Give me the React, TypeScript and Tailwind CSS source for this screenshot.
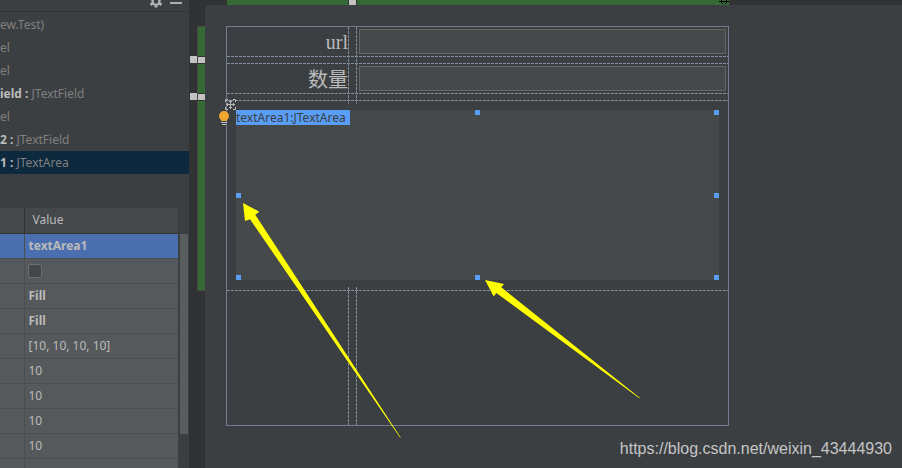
import { useState } from "react";

type TreeItem = {
  name?: string;
  type: string;
  selected?: boolean;
};

const treeItems: TreeItem[] = [
  { type: "ew.Test)" },
  { type: "el" },
  { type: "el" },
  { name: "ield", type: "JTextField" },
  { type: "el" },
  { name: "2", type: "JTextField" },
  { name: "1", type: "JTextArea", selected: true },
];

const properties = ["Fill", "Fill", "[10, 10, 10, 10]", "10", "10", "10", "10", ""];

const hGuide =
  "h-px w-full bg-[repeating-linear-gradient(90deg,#838d9c_0_3px,transparent_3px_4px)]";
const vGuide =
  "w-px bg-[repeating-linear-gradient(180deg,#838d9c_0_3px,transparent_3px_4px)]";

const Tree = () => (
  <ul className="mt-px h-[195px] shrink-0">
    {treeItems.map((item, index) => (
      <li
        key={index}
        className={
          item.selected
            ? "flex h-[23px] items-center bg-[#0d293e] whitespace-pre"
            : "flex h-[23px] items-center whitespace-pre"
        }
      >
        {item.name && <span className="font-bold text-[#bbbbbb]">{item.name} : </span>}
        <span className="text-[#808080]">{item.type}</span>
      </li>
    ))}
  </ul>
);

const PropertyTable = () => {
  const [checked, setChecked] = useState(false);

  return (
    <div className="flex min-h-0 flex-1 bg-[#3c3f41]">
      <div className="flex-1 bg-[#55595b]">
        <table className="w-full table-fixed border-collapse text-left text-[#bbbbbb]">
          <thead>
            <tr className="h-[25px] border-b border-[#323232] bg-[#45484a]">
              <td className="w-6 border-r border-[#323232] p-0" />
              <th className="p-0 pl-2 font-normal">Value</th>
            </tr>
          </thead>
          <tbody>
            <tr className="h-[25px] border-b border-[#4b4e50] bg-[#4b6eaf]">
              <td className="border-r border-[#4b4e50] p-0" />
              <td className="p-0 pl-1 font-bold">textArea1</td>
            </tr>
            <tr className="h-[25px] border-b border-[#4b4e50]">
              <td className="border-r border-[#4b4e50] p-0" />
              <td className="p-0 pl-[3px]">
                <input
                  type="checkbox"
                  aria-label="Value"
                  checked={checked}
                  onChange={(e) => setChecked(e.target.checked)}
                  className="block size-[14px] appearance-none rounded-[2px] border border-[#6b6e70] bg-[#43474a] checked:bg-[#4b6eaf]"
                />
              </td>
            </tr>
            {properties.map((value, index) => (
              <tr key={index} className="h-[25px] border-b border-[#4b4e50]">
                <td className="border-r border-[#4b4e50] p-0" />
                <td className={value === "Fill" ? "p-0 pl-1 font-bold" : "p-0 pl-1"}>{value}</td>
              </tr>
            ))}
          </tbody>
        </table>
      </div>
      {/* Scrollbar */}
      <div className="w-[11px] px-px pt-[26px]">
        <div className="ml-px h-[200px] w-2 bg-[#5a5d5e]" />
      </div>
    </div>
  );
};

const Sidebar = () => (
  <aside className="flex w-[189px] shrink-0 flex-col overflow-hidden bg-[#3c3f41] text-[12px]">
    <div className="flex h-3 shrink-0 items-end justify-end gap-2 border-b border-[#323435] pr-[7px]">
      <button aria-label="Settings" className="h-[11px] w-3 overflow-hidden">
        <svg viewBox="0 0 12 11" className="h-[11px] w-3">
          <g fill="#afb1b3">
            <rect x="4.500" y="-5" width="3" height="12.500" />
            <rect x="4.500" y="-4" width="3" height="12" transform="rotate(60 6 1.500)" />
            <rect x="4.500" y="-4" width="3" height="12" transform="rotate(-60 6 1.500)" />
            <circle cx="6" cy="1.500" r="4.400" />
          </g>
          <circle cx="6" cy="1.500" r="2.200" fill="#3c3f41" />
        </svg>
      </button>
      <button aria-label="Hide" className="h-[11px] w-3">
        <span className="-mt-1 block h-[2px] w-3 bg-[#afb1b3]" />
      </button>
    </div>
    <Tree />
    <PropertyTable />
  </aside>
);

const RowMark = () => (
  <div className="-ml-2 flex h-[9px] items-center gap-px">
    <span className="mb-px size-[7px] bg-[#c3c3c3]" />
    <span className="h-2 w-[7px] border-y border-[#313233] bg-[#c3c3c3]" />
  </div>
);

const RowRuler = () => (
  <div className="w-4 shrink-0 bg-[#313233] pt-[26px] pl-2">
    <div className="h-[265px] border border-r-0 border-[#45494a] bg-[#366a35] pt-[28px]">
      <RowMark />
      <div className="h-[28px]" />
      <RowMark />
    </div>
  </div>
);

const ColumnRuler = () => (
  <div className="h-[5px] shrink-0 bg-[#313233] pr-[173px] pl-[22px]">
    <div className="flex h-full justify-between bg-[#366a35] pl-[121px]">
      <span className="w-[9px] border-x border-[#313233] bg-[#c3c3c3]" />
      <svg viewBox="0 0 10 5" className="h-[5px] w-[10px]" fill="none" stroke="#000">
        <path d="M0 1.500h10M2.500 0v3M7.500 0v3M3 3.500h1M6 3.500h1" />
      </svg>
    </div>
  </div>
);

type FieldProps = {
  id: string;
  label: string;
  className: string;
};

const Field = ({ id, label, className }: FieldProps) => (
  <div className="flex h-[29px] items-center pr-[2px]">
    <label htmlFor={id} className={`w-[121px] shrink-0 text-right text-[#bbbbbb] ${className}`}>
      {label}
    </label>
    <input
      id={id}
      className="ml-[11px] h-[25px] min-w-0 flex-1 border border-[#646464] bg-[#45494a] px-1 text-[#bbbbbb] outline-none"
    />
  </div>
);

const handles = [
  "top-0 left-0",
  "top-0 left-1/2 -translate-x-[3px]",
  "top-0 right-0",
  "top-1/2 left-0 -translate-y-[2px]",
  "top-1/2 right-0 -translate-y-[2px]",
  "bottom-0 left-0",
  "bottom-0 left-1/2 -translate-x-[3px]",
  "bottom-0 right-0",
];

const TextArea = () => (
  <div className="relative mx-[9px] mt-[9px] mb-[10px]">
    <textarea
      id="textArea1"
      className="block h-[170px] w-full resize-none bg-[#45494a] pt-5 text-[#bbbbbb] outline-none"
    />
    {handles.map((position) => (
      <span key={position} className={`absolute size-[5px] bg-[#589df6] ${position}`} />
    ))}
    <label
      htmlFor="textArea1"
      className="absolute top-0 left-0 bg-[#589df6] pr-1 text-[12px] leading-[15px] text-[#3c3f41]"
    >
      textArea1:JTextArea
    </label>
    {/* Drag grip and intention bulb */}
    <svg
      viewBox="0 0 11 11"
      className="absolute -top-[11px] -left-[11px] size-[11px]"
      fill="none"
      stroke="#b8babc"
    >
      <path d="M.5 3V.5H3M8 .5h2.500V3M10.500 8v2.500H8M3 10.500H.5V8M5.500 1v9M1 5.500h9M4 2.500h3M4 8.500h3M2.500 4v3M8.500 4v3" />
    </svg>
    <svg viewBox="0 0 10 15" className="absolute top-0 -left-[17px] h-[15px] w-[10px]">
      <path d="M5 1a5 5 0 0 1 5 5c0 2-1.500 3-2.500 5h-5C1.500 9 0 8 0 6a5 5 0 0 1 5-5z" fill="#f0a732" />
      <path d="M2 12.500h6M3 14.500h4" stroke="#c3c3c3" />
    </svg>
  </div>
);

const Arrows = () => (
  <svg
    viewBox="226 26 503 420"
    className="pointer-events-none absolute -top-px -left-px h-[420px] w-[503px]"
    fill="#ffff00"
  >
    <path d="M243 203L259.300 211.700L255.300 214.700L401 438L400 437.500L250 219.300L245 221z" />
    <path d="M485 280L504 284L501.300 287.300L640 398L639 398L496.300 293L493.700 296.500z" />
  </svg>
);

const FormCanvas = () => (
  <main className="flex-1 rounded-tl-[2px] bg-[#3c3f41] pt-[21px] pr-[173px] pl-[21px]">
    <div className="relative border border-[#717c90]">
      <Field id="url" label="url" className="font-['Liberation_Serif',serif] text-[20px]" />
      <div className={hGuide} />
      <div className="h-[6px]" />
      <div className={hGuide} />
      <Field
        id="count"
        label="数量"
        className="font-['Noto_Sans_CJK_SC',sans-serif] text-[20px]"
      />
      <div className={hGuide} />
      <div className="h-[6px]" />
      <div className={hGuide} />
      <TextArea />
      <div className={hGuide} />
      <div className="h-[134px]" />

      {/* Column guides */}
      <div className="pointer-events-none absolute top-0 left-[121px] flex h-[77px] gap-[7px]">
        <span className={vGuide} />
        <span className={vGuide} />
      </div>
      <div className="pointer-events-none absolute bottom-0 left-[121px] flex h-[138px] gap-[7px]">
        <span className={vGuide} />
        <span className={vGuide} />
      </div>
      <Arrows />
    </div>
  </main>
);

export default function App() {
  return (
    <div className="relative flex h-screen overflow-hidden bg-[#3c3f41] font-['Noto_Sans',sans-serif]">
      <Sidebar />
      <RowRuler />
      <div className="flex min-w-0 flex-1 flex-col bg-[#313233]">
        <ColumnRuler />
        <FormCanvas />
      </div>
      <p className="absolute right-[10px] bottom-[7px] font-['Liberation_Sans',sans-serif] text-[16px] text-[#c4c5c6]">
        https://blog.csdn.net/weixin_43444930
      </p>
    </div>
  );
}
